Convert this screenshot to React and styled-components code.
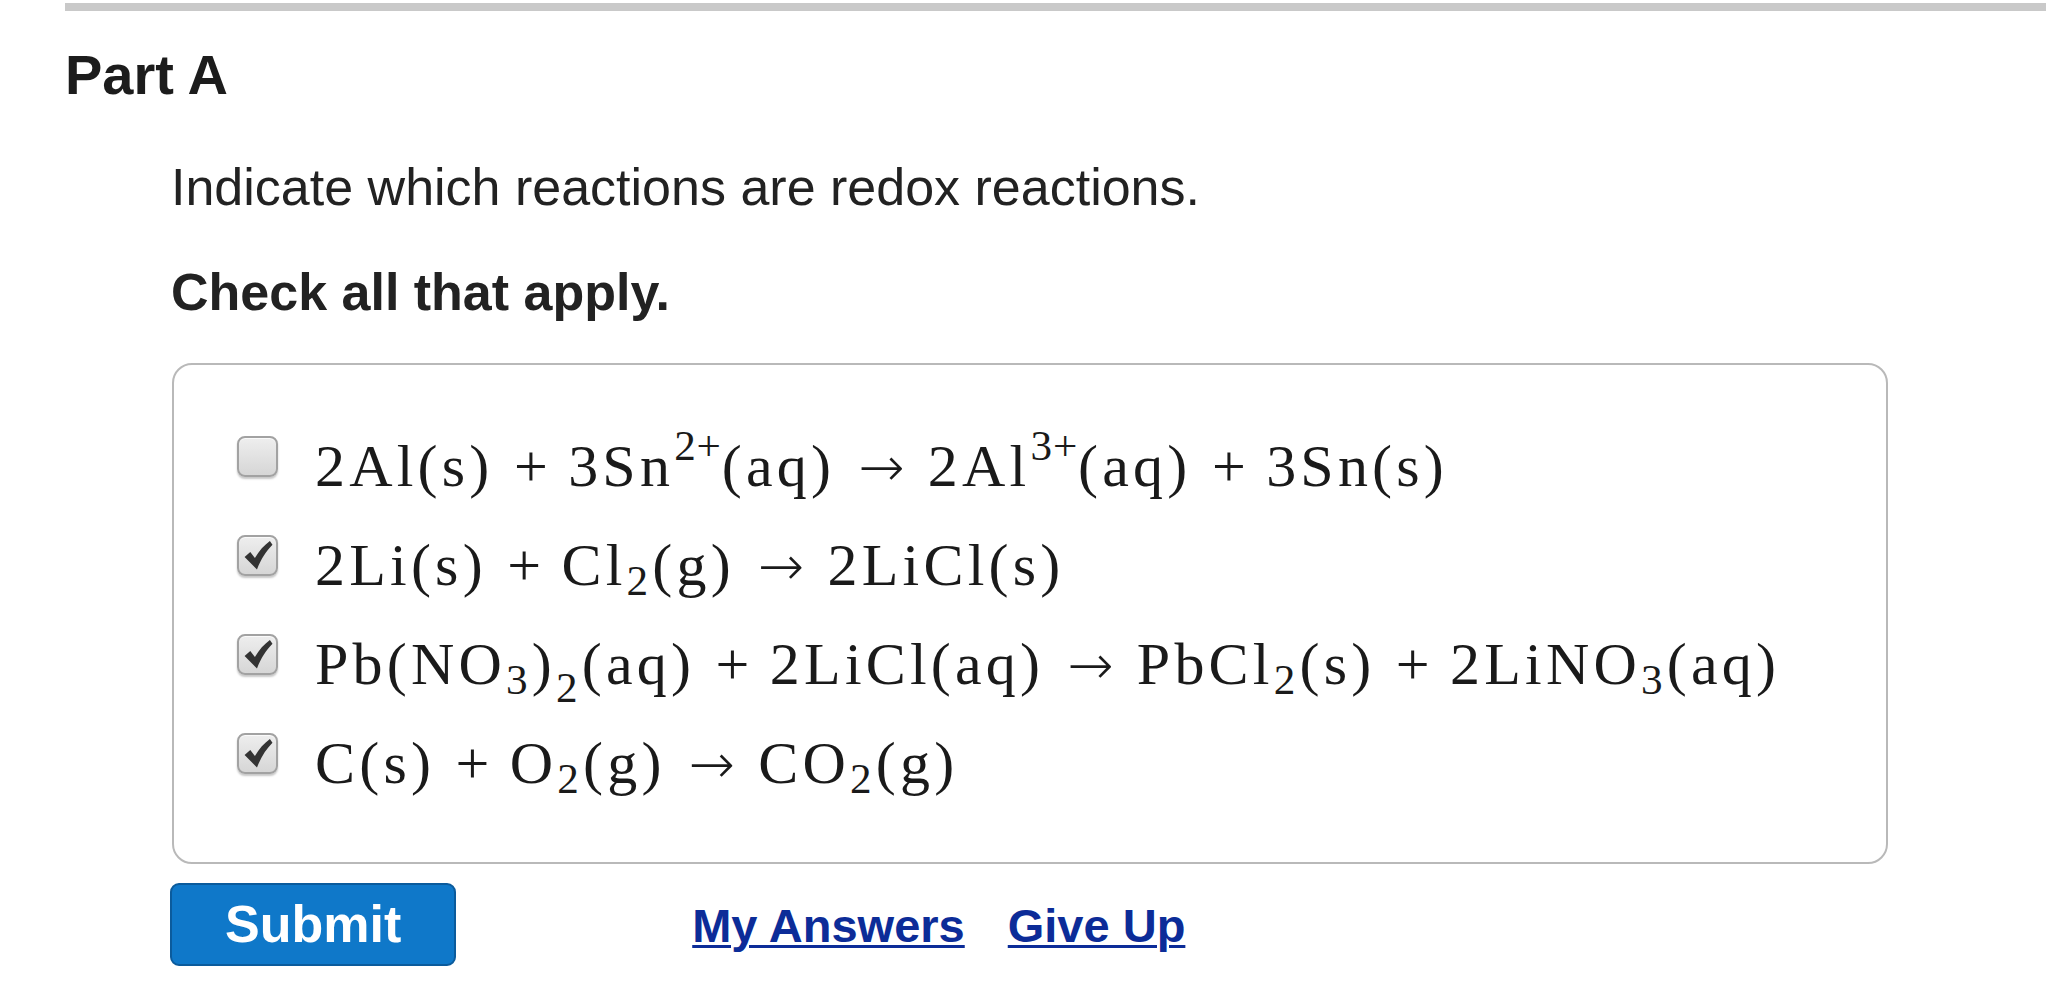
import React from 'react';
import styled, { createGlobalStyle } from 'styled-components';

const Global = createGlobalStyle`
  html, body { margin: 0; padding: 0; background: #ffffff; }
  body { font-family: "Liberation Sans", Arial, sans-serif; color: #222222; }
`;

const Page = styled.div`
  padding: 3px 0 0 65px;
`;

const TopRule = styled.div`
  height: 8px;
  background: #c9c9c9;
`;

const PartTitle = styled.h2`
  margin: 36px 0 0;
  font-size: 56px;
  line-height: 56px;
  font-weight: 700;
  color: #1c1c1c;
`;

const Body = styled.div`
  padding-left: 106px;
  display: flex;
  flex-direction: column;
  align-items: flex-start;
`;

const Prompt = styled.p`
  margin: 58px 0 0;
  font-size: 52px;
  line-height: 52px;
  color: #222222;
`;

const Instruction = styled.p`
  margin: 53px 0 0;
  font-size: 52px;
  line-height: 52px;
  font-weight: 700;
  color: #222222;
`;

const ChoiceBox = styled.div`
  margin: 45px 0 0 1px;
  width: 1716px;
  box-sizing: border-box;
  border: 2px solid #b9b9b9;
  border-radius: 20px;
  padding: 42px 0 59px 63px;
`;

const ChoiceRow = styled.label`
  display: flex;
  align-items: flex-start;
  height: 99px;
`;

const Box = styled.span`
  flex: none;
  width: 41px;
  height: 41px;
  margin-top: 29px;
  box-sizing: border-box;
  border: 2px solid #a2a2a2;
  border-radius: 8px;
  background: linear-gradient(#eeeeee, #d6d6d6);
  box-shadow: 0 2px 2px rgba(0, 0, 0, 0.22), inset 0 1px 0 #fafafa;
  display: flex;
  align-items: center;
  justify-content: center;
`;

const Math = styled.span`
  margin-left: 37px;
  padding-top: 20px;
  font-family: "Liberation Serif", "Times New Roman", serif;
  font-size: 60px;
  line-height: 79px;
  letter-spacing: 0.07em;
  color: #1a1a1a;
  white-space: nowrap;
`;

const Sup = styled.sup`
  font-size: 0.72em;
  line-height: 0;
  vertical-align: 0.6em;
  letter-spacing: 0.02em;
`;

const Sub = styled.sub`
  font-size: 0.72em;
  line-height: 0;
  vertical-align: ${(p) => (p.$deep ? '-0.42em' : '-0.22em')};
`;

const Op = styled.span`
  margin: 0 0.34em;
  letter-spacing: 0;
`;

const Rel = styled.span`
  margin: 0 0.42em;
  font-family: "DejaVu Sans", "Liberation Serif", serif;
  font-size: 0.92em;
  font-weight: 200;
  letter-spacing: 0;
`;

const Footer = styled.div`
  display: flex;
  align-items: baseline;
  margin: 19px 0 0 -1px;
`;

const SubmitButton = styled.button`
  height: 83px;
  box-sizing: border-box;
  padding: 0 53px;
  background: #0f78c9;
  border: 2px solid #0b5b9c;
  border-radius: 9px;
  color: #ffffff;
  font-family: "Liberation Sans", Arial, sans-serif;
  font-weight: 700;
  font-size: 52px;
  line-height: 79px;
`;

const ActionLink = styled.a`
  margin-left: ${(p) => p.$gap}px;
  font-family: "Liberation Sans", Arial, sans-serif;
  font-weight: 700;
  font-size: 47px;
  color: #0c2c98;
  text-decoration: underline;
  text-decoration-thickness: 3px;
  text-underline-offset: 3px;
  cursor: pointer;
`;

const Check = () => (
  <svg width="31" height="31" viewBox="0 0 30 30" aria-hidden="true">
    <path
      d="M2.5 16.5 L8 11.5 L12.5 17.5 C16.5 10.5 21.5 5 27 1 L29.5 4.5 C23.5 10.5 18.5 18 14.5 28.5 Z"
      fill="#333333"
    />
  </svg>
);

const Choice = ({ checked, children }) => (
  <ChoiceRow>
    <Box>{checked ? <Check /> : null}</Box>
    <Math>{children}</Math>
  </ChoiceRow>
);

export default function App() {
  return (
    <>
      <Global />
      <Page>
        <TopRule />
        <PartTitle>Part A</PartTitle>
        <Body>
          <Prompt>Indicate which reactions are redox reactions.</Prompt>
          <Instruction>Check all that apply.</Instruction>
          <ChoiceBox>
            <Choice>
              2Al(s)<Op>+</Op>3Sn<Sup>2+</Sup>(aq)<Rel>→</Rel>2Al<Sup>3+</Sup>(aq)<Op>+</Op>3Sn(s)
            </Choice>
            <Choice checked>
              2Li(s)<Op>+</Op>Cl<Sub>2</Sub>(g)<Rel>→</Rel>2LiCl(s)
            </Choice>
            <Choice checked>
              Pb(NO<Sub>3</Sub>)<Sub $deep>2</Sub>(aq)<Op>+</Op>2LiCl(aq)<Rel>→</Rel>PbCl<Sub>2</Sub>(s)<Op>+</Op>2LiNO<Sub>3</Sub>(aq)
            </Choice>
            <Choice checked>
              C(s)<Op>+</Op>O<Sub>2</Sub>(g)<Rel>→</Rel>CO<Sub>2</Sub>(g)
            </Choice>
          </ChoiceBox>
          <Footer>
            <SubmitButton type="button">Submit</SubmitButton>
            <ActionLink $gap={236}>My Answers</ActionLink>
            <ActionLink $gap={43}>Give Up</ActionLink>
          </Footer>
        </Body>
      </Page>
    </>
  );
}
